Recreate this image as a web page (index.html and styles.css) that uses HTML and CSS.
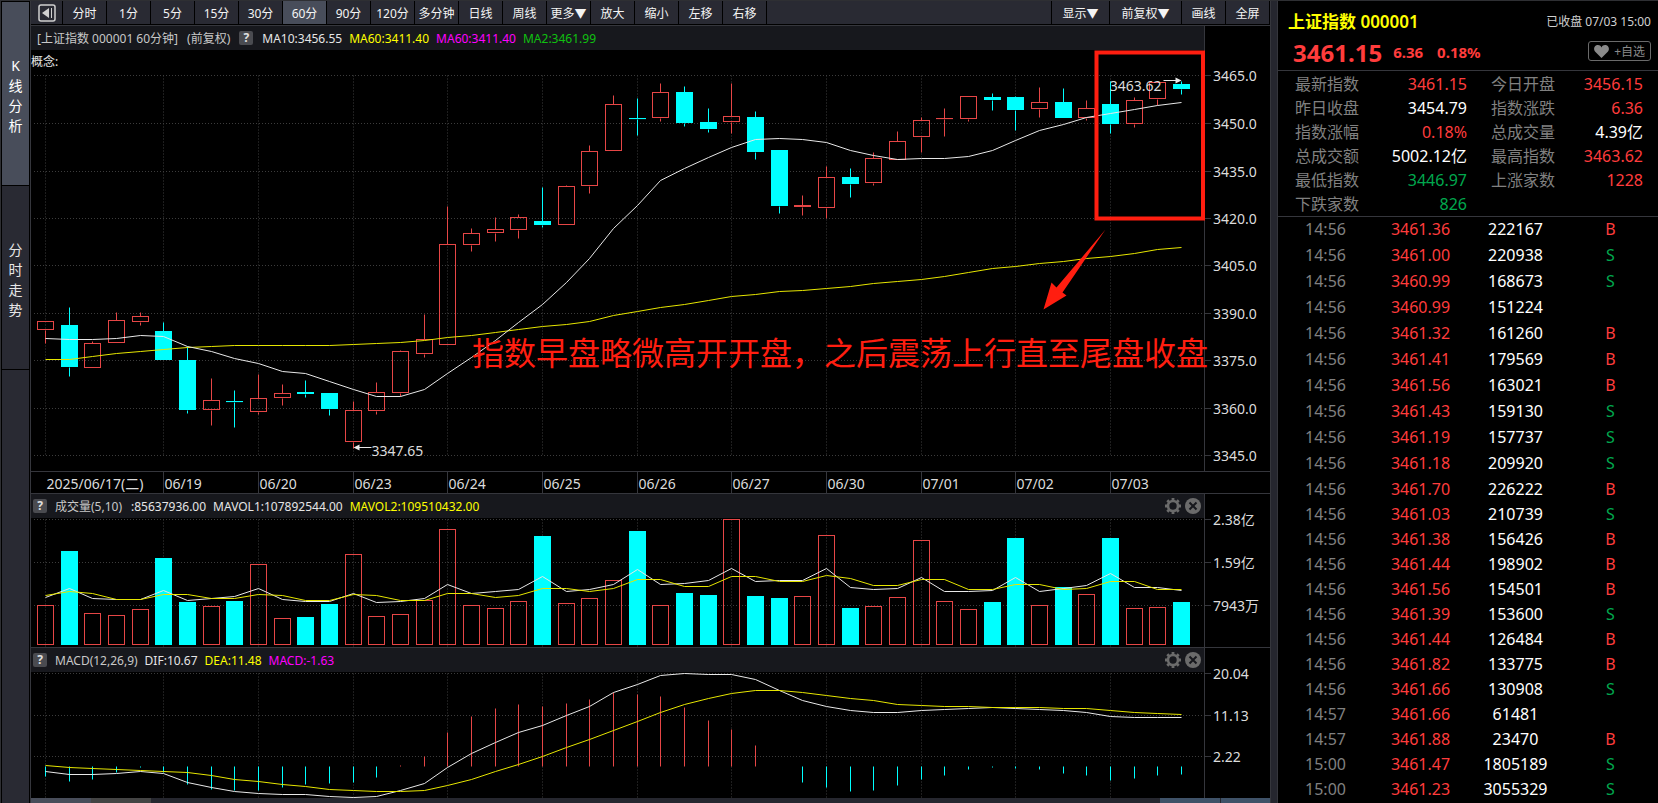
FILE: index.html
```html
<!DOCTYPE html>
<html lang="zh-CN">
<head>
  <meta charset="UTF-8">
  <meta name="viewport" content="width=device-width, initial-scale=1.0">
  <title>上证指数 000001</title>
  <link rel="stylesheet" href="styles.css">
</head>
<body>

  <svg class="sprite" aria-hidden="true">
    <symbol id="gear" viewBox="0 0 16 16">
      <circle cx="8" cy="8" r="5" fill="none" stroke="#6b6b6b" stroke-width="2.6"/>
      <path d="M8 0v3M8 13v3M0 8h3M13 8h3M2.3 2.3l2.1 2.1M11.6 11.6l2.1 2.1M2.3 13.7l2.1-2.1M11.6 4.4l2.1-2.1" stroke="#6b6b6b" stroke-width="2.8"/>
    </symbol>
    <symbol id="close" viewBox="0 0 16 16">
      <circle cx="8" cy="8" r="8" fill="#6b6b6b"/>
      <path d="M4.5 4.5l7 7M11.5 4.5l-7 7" stroke="#17181d" stroke-width="2"/>
    </symbol>
  </svg>

  <div class="app">
    <nav class="side">
      <button class="side-tab active"><span>K</span><span>线</span><span>分</span><span>析</span></button>
      <button class="side-tab"><span>分</span><span>时</span><span>走</span><span>势</span></button>
      <div class="side-rest"></div>
    </nav>

    <main class="main">
      <div class="toolbar">
        <button class="tool tool-icon" aria-label="收起">
          <svg width="18" height="18" viewBox="0 0 18 18">
            <rect x="1" y="1" width="16" height="16" rx="2" fill="none" stroke="#d0d0d0" stroke-width="1.5"/>
            <path d="M11 4v10L4 9z" fill="#d0d0d0"/>
            <path d="M13.5 4v10" stroke="#d0d0d0"/>
          </svg>
        </button>
        <button class="tool">分时</button>
        <button class="tool">1分</button>
        <button class="tool">5分</button>
        <button class="tool">15分</button>
        <button class="tool">30分</button>
        <button class="tool active">60分</button>
        <button class="tool">90分</button>
        <button class="tool">120分</button>
        <button class="tool">多分钟</button>
        <button class="tool">日线</button>
        <button class="tool">周线</button>
        <button class="tool">更多▼</button>
        <button class="tool">放大</button>
        <button class="tool">缩小</button>
        <button class="tool">左移</button>
        <button class="tool">右移</button>
        <span class="tool-space"></span>
        <button class="tool tool-md">显示▼</button>
        <button class="tool tool-lg">前复权▼</button>
        <button class="tool">画线</button>
        <button class="tool">全屏</button>
      </div>

      <section class="pane pane-price">
        <div class="pane-head head-price">
          <span class="dim">[上证指数 000001 60分钟]</span>
          <span class="dim">(前复权)</span>
          <button class="help">?</button>
          <span>MA10:3456.55</span>
          <span class="yellow">MA60:3411.40</span>
          <span class="magenta">MA60:3411.40</span>
          <span class="green">MA2:3461.99</span>
        </div>
        <div class="plot"><svg id="price"></svg></div>
        <span class="concept">概念:</span>
      </section>

      <div class="dates"><svg id="dates"></svg></div>

      <section class="pane pane-volume">
        <div class="pane-head">
          <button class="help">?</button>
          <span class="name dim">成交量(5,10)</span>
          <span class="vol">:85637936.00</span>
          <span>MAVOL1:107892544.00</span>
          <span class="yellow">MAVOL2:109510432.00</span>
          <span class="actions">
            <button aria-label="设置"><svg width="16" height="16"><use href="#gear"/></svg></button>
            <button aria-label="关闭"><svg width="16" height="16"><use href="#close"/></svg></button>
          </span>
        </div>
        <div class="plot"><svg id="volume"></svg></div>
      </section>

      <section class="pane pane-macd">
        <div class="pane-head">
          <button class="help">?</button>
          <span class="name dim">MACD(12,26,9)</span>
          <span>DIF:10.67</span>
          <span class="yellow">DEA:11.48</span>
          <span class="magenta">MACD:-1.63</span>
          <span class="actions">
            <button aria-label="设置"><svg width="16" height="16"><use href="#gear"/></svg></button>
            <button aria-label="关闭"><svg width="16" height="16"><use href="#close"/></svg></button>
          </span>
        </div>
        <div class="plot"><svg id="macd"></svg></div>
      </section>

      <div class="scroll">
        <span class="scroll-a"></span>
        <span class="scroll-b"></span>
        <span class="scroll-space"></span>
        <span class="scroll-c"></span>
        <span class="scroll-d"></span>
      </div>
    </main>

    <aside class="quote">
      <header class="quote-head">
        <div class="quote-row">
          <h1>上证指数 000001</h1>
          <span class="status">已收盘 07/03 15:00</span>
        </div>
        <div class="quote-row quote-price">
          <strong class="last">3461.15</strong>
          <strong>6.36</strong>
          <strong class="pct">0.18%</strong>
          <button class="fav">
            <svg width="15" height="13" viewBox="0 0 15 13"><path d="M7.5 13L1 6.5C-.6 4.600 0 1.500 2 .5 4-.4 6.500 0 7.500 2.500 8.500 0 11-.4 13 .5c2 1 2.600 4.100 1 6z" fill="#8a8a8a"/></svg>
            +自选
          </button>
        </div>
      </header>
      <dl class="stats">
        <dt>最新指数</dt><dd class="up">3461.15</dd><dt>今日开盘</dt><dd class="up">3456.15</dd>
        <dt>昨日收盘</dt><dd>3454.79</dd><dt>指数涨跌</dt><dd class="up">6.36</dd>
        <dt>指数涨幅</dt><dd class="up">0.18%</dd><dt>总成交量</dt><dd>4.39亿</dd>
        <dt>总成交额</dt><dd>5002.12亿</dd><dt>最高指数</dt><dd class="up">3463.62</dd>
        <dt>最低指数</dt><dd class="down">3446.97</dd><dt>上涨家数</dt><dd class="up">1228</dd>
        <dt>下跌家数</dt><dd class="down">826</dd>
      </dl>
      <table class="ticks"><tbody id="ticks"></tbody></table>
    </aside>
  </div>

  <script src="script.js"></script>
</body>
</html>
```
FILE: styles.css
```css
* {
  box-sizing: border-box;
}

body {
  margin: 0;
  background: #000;
  color: #e6e6e6;
  font-family: "Noto Sans", "Noto Sans CJK SC", sans-serif;
  font-size: 12px;
}

button {
  margin: 0;
  padding: 0;
  border: 0;
  background: none;
  color: inherit;
  font: inherit;
  cursor: pointer;
}

.sprite {
  position: absolute;
  width: 0;
  height: 0;
}

.app {
  display: flex;
  height: 100vh;
  overflow: hidden;
  border-top: 1px solid #2e2f33;
  border-left: 1px solid #2e2f33;
}

/* side tabs */
.side {
  display: flex;
  flex-direction: column;
  width: 30px;
  padding: 1px 1px 0;
  border-right: 1px solid #35363c;
}

.side-tab {
  display: flex;
  flex-direction: column;
  align-items: center;
  justify-content: center;
  height: 183px;
  margin-bottom: 1px;
  padding-top: 4px;
  background: #292a33;
  font-size: 14px;
  line-height: 20px;
}

.side-tab.active {
  background: #484d5a;
  color: #fff;
}

.side-rest {
  flex: 1;
  background: #292a33;
}

/* toolbar */
.main {
  flex: 1;
  min-width: 0;
  display: flex;
  flex-direction: column;
  border-right: 1px solid #35363c;
}

.toolbar {
  display: flex;
  height: 25px;
  padding-bottom: 1px;
  border-bottom: 1px solid #35363c;
}

.tool {
  width: 44px;
  background: #292a33;
  border-right: 1px solid #000;
  color: #f4f4f4;
  white-space: nowrap;
}

.tool.active {
  background: #484d5a;
}

.tool-icon {
  width: 32px;
  display: flex;
  align-items: center;
  justify-content: center;
}

.tool-space {
  flex: 1;
  background: #292a33;
  border-right: 1px solid #000;
}

.tool-md {
  width: 58px;
}

.tool-lg {
  width: 72px;
}

/* chart panes */
.pane {
  position: relative;
  display: flex;
  flex-direction: column;
  min-height: 0;
}

.pane-price {
  flex: 446;
}

.pane-volume {
  flex: 153;
  border-bottom: 1px solid #35363c;
}

.pane-macd {
  flex: 150;
}

.pane-head {
  display: flex;
  align-items: center;
  gap: 7px;
  height: 24px;
  margin-right: 65px;
  padding: 0 3px 0 2px;
  background: #17181d;
  border-right: 1px solid #35363c;
  white-space: nowrap;
}

.head-price {
  padding-left: 6px;
}

.head-price .dim,
.head-price .help {
  margin-right: 2px;
}

.dim {
  color: #c8c8c8;
}

.yellow {
  color: #ffff00;
}

.magenta {
  color: #f0f;
}

.green {
  color: #10c010;
}

.help {
  width: 14px;
  height: 14px;
  border-radius: 2px;
  background: #4a4b50;
  color: #e0e0e0;
  font-weight: bold;
  line-height: 14px;
}

.name {
  margin-left: 1px;
}

.vol {
  margin-left: 2px;
}

.actions {
  display: flex;
  gap: 4px;
  margin-left: auto;
}

.actions button,
.actions svg {
  display: block;
  height: 16px;
}

.concept {
  position: absolute;
  left: 0;
  top: 26px;
}

.plot {
  flex: 1;
  min-height: 0;
}

.plot svg,
.dates svg {
  display: block;
  width: 100%;
  height: 100%;
  overflow: visible;
}

.dates {
  height: 23px;
  border-top: 1px solid #35363c;
  border-bottom: 1px solid #35363c;
}

svg text {
  fill: #dcdcdc;
  font-size: 14px;
  dominant-baseline: central;
}

svg .note {
  fill: #ff1e10;
  font-size: 32px;
}

.grid {
  stroke: #3c3c3c;
  stroke-dasharray: 1 2;
}

.axis {
  stroke: #35363c;
}

.rise {
  fill: none;
  stroke: #e64646;
}

.fall {
  fill: #00ffff;
  stroke: #00ffff;
}

.line-a,
.line-b {
  fill: none;
  stroke: #e8e8e8;
}

.line-b {
  stroke: #e6e600;
}

/* bottom scroller */
.scroll {
  display: flex;
  height: 5px;
  background: #26272f;
}

.scroll-a {
  width: 60px;
  background: #484d5a;
}

.scroll-b {
  width: 60px;
  background: #444;
}

.scroll-space {
  flex: 1;
}

.scroll-c,
.scroll-d {
  width: 60px;
  background: #3f5268;
}

.scroll-d {
  width: 50px;
  border-left: 1px solid #26272f;
}

/* quote panel */
.quote {
  width: 387px;
  border-left: 6px solid #25262e;
  box-shadow: inset 1px 0 #35363c;
  padding-left: 1px;
}

.quote-head {
  height: 70px;
  padding: 7px 7px 0 10px;
  border-bottom: 1px solid #35363c;
}

.quote-row {
  display: flex;
  align-items: center;
  justify-content: space-between;
  height: 25px;
}

h1 {
  margin: 0;
  color: #ffff00;
  font-size: 17px;
  font-weight: 600;
}

.status {
  color: #d0d0d0;
}

.quote-price {
  justify-content: flex-start;
  gap: 14px;
  height: 38px;
  padding-left: 5px;
  color: #ff3c3c;
  font-size: 15px;
}

.last {
  margin-right: -3px;
  font-size: 24px;
}

.fav {
  display: flex;
  align-items: center;
  gap: 5px;
  height: 20px;
  margin: 0 0 2px auto;
  padding: 0 5px;
  border: 1px solid #6a6a6a;
  border-radius: 3px;
  color: #8a8a8a;
  font-size: 12px;
}

.stats {
  display: grid;
  grid-template-columns: 72px 1fr 88px 88px;
  margin: 0;
  padding: 1px 15px 0 17px;
  border-bottom: 1px solid #35363c;
  font-size: 16px;
  line-height: 24px;
}

dt {
  color: #808080;
}

dt:nth-of-type(2n) {
  padding-left: 24px;
}

dd {
  margin: 0;
  color: #fff;
  text-align: right;
}

dd.up,
.up {
  color: #ff3c3c;
}

dd.down,
.down {
  color: #00a84e;
}

.ticks {
  width: 100%;
  table-layout: fixed;
  border-collapse: collapse;
  color: #fff;
  font-size: 16px;
  line-height: 22px;
  text-align: center;
}

.ticks td {
  height: 25px;
  padding: 0 0 3px;
}

.ticks tr:nth-child(-n+11) td {
  height: 26px;
}

.ticks .time {
  color: #808080;
}
```
FILE: script.js
```js
// high, body top, body bottom, low, 1 = rise / 0 = fall (levels on the 50-472 scale)
const candles = [
  [322,322,331,344,1],[308,326,368,377,0],[342,344,369,369,1],[313,321,344,344,1],[313,317,323,326,1],
  [323,332,361,361,0],[347,361,411,414,0],[379,401,411,426,1],[391,402,403,428,0],[375,399,413,415,1],
  [385,394,399,406,1],[381,393,395,398,0],[394,394,410,416,0],[402,411,443,449,1],[383,393,412,415,1],
  [351,352,394,397,1],[315,340,355,358,1],[206,244,346,346,1],[228,233,245,251,1],[217,229,233,241,1],
  [214,217,230,238,1],[187,221,225,227,0],[185,186,225,225,1],[145,151,186,193,1],[95,104,151,151,1],
  [98,118,119,135,0],[83,92,118,121,1],[86,92,123,126,0],[108,122,129,132,0],[83,116,122,133,1],
  [111,117,152,159,0],[150,150,206,213,0],[195,205,207,215,1],[166,177,208,218,1],[168,177,184,197,0],
  [152,158,183,185,1],[131,141,160,160,1],[117,120,137,152,1],[108,118,119,136,1],[96,96,119,121,1],
  [93,97,100,110,0],[96,97,110,130,0],[87,102,109,117,1],[88,102,118,118,0],[100,108,118,120,1],
  [81,104,124,133,0],[97,100,124,127,1],[82,82,99,105,1],[81,84,89,94,0]
];
const ma10 = [339,340,340,339,336,337,347,352,359,364,372,374,382,390,397,397,390,374,358,341,323,305,283,258,228,
  205,180,168,157,147,139,138,139,142,150,155,159,158,158,156,150,140,130,124,117,113,109,105,102];
const ma60 = [360,360,357,354,352,350,348,347,346,346,346,346,346,345,344,343,341,338,336,333,330,327,325,322,316,
  312,308,305,301,297,295,292,291,289,287,284,282,280,277,273,269,267,264,261,258,256,253,249,247];

const volumes = [605,552,613,615,609,559,602,606,601,565,618,617,604,555,616,614,600,530,605,608,601,537,603,598,581,
  532,605,593,595,520,596,598,596,536,608,606,597,541,601,609,602,539,605,587,594,539,608,607,602];
const vol5 = [597,588,598,599,599,590,600,598,596,588,599,601,601,593,602,601,598,584,593,591,589,577,591,589,584,
  570,584,583,581,569,582,581,581,569,587,589,588,578,591,591,590,578,591,588,585,574,587,587,590];
const vol10 = [595,591,593,599,599,594,594,598,598,594,595,600,600,594,595,600,600,593,593,597,595,588,588,591,588,
  580,580,586,586,577,577,582,582,576,579,585,585,580,580,589,589,584,584,589,588,582,582,589,589];

const macdBars = [776,781,779,772,767,772,784,789,790,790,787,784,783,782,777,765,756,732,716,708,704,706,703,699,692,
  694,696,707,720,729,745,766,782,787,791,790,785,779,775,769,767,768,769,773,775,780,778,775,774];
const dif = [771,774,774,773,771,773,782,787,791,793,794,794,796,797,796,790,783,767,753,742,732,725,715,706,692,
  684,675,673,674,674,679,690,700,706,710,712,712,710,709,708,707,708,709,710,712,716,717,717,717];
const dea = [765,767,768,769,770,771,772,775,779,781,784,786,789,790,791,791,790,785,779,771,764,756,747,739,730,
  721,712,704,698,693,690,690,692,695,698,700,704,705,706,706,707,707,707,708,708,710,712,713,714];

const days = [[0,'2025/06/17(二)'],[5,'06/19'],[9,'06/20'],[13,'06/23'],[17,'06/24'],[21,'06/25'],
  [25,'06/26'],[29,'06/27'],[33,'06/30'],[37,'07/01'],[41,'07/02'],[45,'07/03']];

const ticks = [
  ['14:56','3461.36','222167','B'],['14:56','3461.00','220938','S'],['14:56','3460.99','168673','S'],
  ['14:56','3460.99','151224',''],['14:56','3461.32','161260','B'],['14:56','3461.41','179569','B'],
  ['14:56','3461.56','163021','B'],['14:56','3461.43','159130','S'],['14:56','3461.19','157737','S'],
  ['14:56','3461.18','209920','S'],['14:56','3461.70','226222','B'],['14:56','3461.03','210739','S'],
  ['14:56','3461.38','156426','B'],['14:56','3461.44','198902','B'],['14:56','3461.56','154501','B'],
  ['14:56','3461.39','153600','S'],['14:56','3461.44','126484','B'],['14:56','3461.82','133775','B'],
  ['14:56','3461.66','130908','S'],['14:57','3461.66','61481',''],['14:57','3461.88','23470','B'],
  ['15:00','3461.47','1805189','S'],['15:00','3461.23','3055329','S']
];

const AXIS = 65;

// builds the coordinate helpers for one chart
function chart(id, top, bottom) {
  const svg = document.getElementById(id);
  const w = svg.clientWidth;
  const h = svg.clientHeight;
  const right = w - AXIS;
  const step = (right - 38) / 48;
  return {
    svg, w, h, right, step,
    x: i => Math.round(14 + i * step) + 0.5,
    y: v => Math.round((v - top) * h / (bottom - top)) + 0.5,
    half: Math.round(step * 0.34)
  };
}

function seg(x1, y1, x2, y2, cls) {
  return `<line x1="${x1}" y1="${y1}" x2="${x2}" y2="${y2}" class="${cls}"/>`;
}

function poly(c, data, cls) {
  return `<polyline class="${cls}" points="${data.map((v, i) => c.x(i) + ',' + c.y(v)).join(' ')}"/>`;
}

function frame(c, rows, gridTop, gridBottom) {
  let out = seg(c.right - 0.5, 0, c.right - 0.5, c.h, 'axis');
  rows.forEach(([v, label]) => {
    const y = c.y(v);
    out += seg(3, y, c.right, y, 'grid') + seg(c.right, y, c.right + 6, y, 'axis');
    out += `<text x="${c.right + 8}" y="${y}">${label}</text>`;
  });
  days.forEach(([i]) => {
    out += seg(c.x(i), c.y(gridTop), c.x(i), c.y(gridBottom), 'grid');
  });
  return out;
}

function bar(c, i, y1, y2, rise) {
  return `<rect x="${c.x(i) - c.half}" y="${y1}" width="${c.half * 2}" height="${Math.max(y2 - y1, 0.1)}" class="${rise ? 'rise' : 'fall'}"/>`;
}

function drawPrice() {
  const c = chart('price', 50, 472);
  const rows = [75, 123, 171, 218, 266, 314, 361, 409, 456].map((v, n) => [v, (3465 - n * 15).toFixed(1)]);
  let out = frame(c, rows, 75, 456);
  candles.forEach(([high, top, bottom, low, rise], i) => {
    const cls = rise ? 'rise' : 'fall';
    out += seg(c.x(i), c.y(high), c.x(i), c.y(top), cls) + seg(c.x(i), c.y(bottom), c.x(i), c.y(low), cls);
    out += bar(c, i, c.y(top), c.y(Math.max(bottom - 1, top)), rise);
  });
  out += poly(c, ma60, 'line-b') + poly(c, ma10, 'line-a');

  // lowest and highest marks
  const lx = c.x(13), ly = c.y(448);
  out += seg(lx + 4, ly, lx + 18, ly, 'line-a') + `<path d="M${lx} ${ly}l6-3v6z" fill="#e8e8e8"/>`;
  out += `<text x="${lx + 18}" y="${c.y(451)}">3347.65</text>`;
  const hx = c.x(48), hy = c.y(80);
  out += seg(hx - 18, hy, hx - 4, hy, 'line-a') + `<path d="M${hx} ${hy}l-6-3v6z" fill="#e8e8e8"/>`;
  out += `<text x="${hx - 20}" y="${c.y(85)}" text-anchor="end">3463.62</text>`;

  // last day highlight
  const bx = c.x(45) - 14;
  out += `<rect x="${bx}" y="${c.y(52)}" width="${c.right - bx - 2}" height="${c.y(218) - c.y(52)}" fill="none" stroke="#ff1e10" stroke-width="4"/>`;
  const ax = c.x(42), ay = c.y(310);
  out += `<path d="M${ax + 4} ${ay}l8-27 5 5 49-58-43 63 4 3z" fill="#ff1e10"/>`;
  out += `<text class="note" x="${c.right + 3}" y="${c.y(353)}" text-anchor="end">指数早盘略微高开开盘，之后震荡上行直至尾盘收盘</text>`;
  c.svg.innerHTML = out;
}

function drawDates() {
  const c = chart('dates', 0, 21);
  c.svg.innerHTML = days.map(([i, label]) =>
    (i ? seg(c.x(i), 0, c.x(i), c.h, 'axis') : '') + `<text x="${c.x(i) + 1}" y="11">${label}</text>`
  ).join('');
}

function drawVolume() {
  const c = chart('volume', 519, 647);
  let out = frame(c, [[520, '2.38亿'], [563, '1.59亿'], [605, '7943万']], 520, 647);
  volumes.forEach((v, i) => {
    out += bar(c, i, c.y(v), c.y(644), candles[i][4]);
  });
  c.svg.innerHTML = out + poly(c, vol5, 'line-a') + poly(c, vol10, 'line-b');
}

function drawMacd() {
  const c = chart('macd', 672, 798);
  let out = frame(c, [[673, '20.04'], [715, '11.13'], [756, '2.22']], 673, 797);
  macdBars.forEach((v, i) => {
    if (v !== 766) out += seg(c.x(i), c.y(766), c.x(i), c.y(v), v < 766 ? 'rise' : 'fall');
  });
  c.svg.innerHTML = out + poly(c, dif, 'line-a') + poly(c, dea, 'line-b');
}

function draw() {
  drawPrice();
  drawDates();
  drawVolume();
  drawMacd();
}

document.getElementById('ticks').innerHTML = ticks.map(([time, price, vol, side]) =>
  `<tr><td class="time">${time}</td><td class="up">${price}</td><td>${vol}</td><td class="${side === 'B' ? 'up' : 'down'}">${side}</td></tr>`
).join('');

draw();
window.addEventListener('resize', draw);
```
